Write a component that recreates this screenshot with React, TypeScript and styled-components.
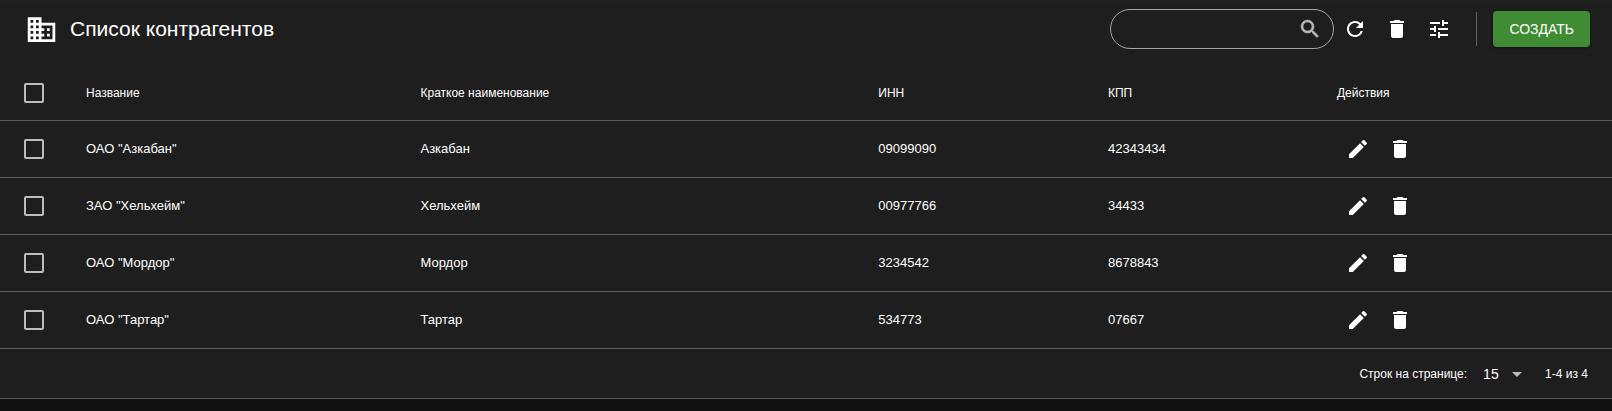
import React from "react";
import styled, { createGlobalStyle } from "styled-components";
import {
  MdArrowDropDown,
  MdDelete,
  MdDomain,
  MdEdit,
  MdRefresh,
  MdSearch,
  MdTune,
} from "react-icons/md";

const GlobalStyle = createGlobalStyle`
  * { box-sizing: border-box; }
  body {
    margin: 0;
    background: #121212;
    color: #fff;
    font-family: "Liberation Sans", Arial, sans-serif;
  }
`;

const Card = styled.main`
  background: #1e1e1e;
  border-top: 2px solid #232323;
  border-bottom: 1px solid #5a5a5a;
  box-shadow: 0 1px 0 #3c3c3c, 0 2px 0 #2a2a2a, 0 3px 3px #1c1c1c;
`;

const Toolbar = styled.header`
  display: flex;
  align-items: center;
  height: 64px;
  padding: 0 22px 10px 25px;
`;

const Title = styled.h1`
  flex: 1;
  margin: 0 0 0 12px;
  font-size: 21px;
  font-weight: 400;
  line-height: 32px;
`;

const SearchBox = styled.label`
  display: flex;
  align-items: center;
  width: 224px;
  height: 40px;
  padding: 0 11px 0 20px;
  border: 1px solid #a5a5a5;
  border-radius: 20px;
  color: #b8b8b8;
`;

const SearchIcon = styled(MdSearch)`
  path:last-child {
    stroke: currentColor;
    stroke-width: 0.6px;
  }
`;

const SearchInput = styled.input`
  flex: 1;
  min-width: 0;
  border: 0;
  outline: 0;
  background: transparent;
  color: #fff;
  font: inherit;
`;

const IconButton = styled.button`
  display: inline-flex;
  align-items: center;
  justify-content: center;
  width: 42px;
  height: 42px;
  padding: 0;
  border: 0;
  background: transparent;
  color: #fff;
  cursor: pointer;
`;

const Divider = styled.span`
  width: 1px;
  height: 34px;
  margin: 0 16px;
  background: #616161;
`;

const CreateButton = styled.button`
  height: 36px;
  padding: 0 16px;
  border: 0;
  border-radius: 4px;
  background: #3f8c35;
  box-shadow: 0 1px 3px rgba(0, 0, 0, 0.5);
  color: #fff;
  font-family: inherit;
  font-size: 14px;
  line-height: 24px;
  cursor: pointer;
`;

const Table = styled.table`
  width: 100%;
  table-layout: fixed;
  border-collapse: separate;
  border-spacing: 0;
  text-align: left;
`;

const Column = styled.col<{ $width?: string }>`
  width: ${({ $width }) => $width ?? "auto"};
`;

const Row = styled.tr<{ $head?: boolean }>`
  height: ${({ $head }) => ($head ? 55 : 57)}px;

  > * {
    border-bottom: 1px solid #5c5c5c;
  }
`;

const HeadCell = styled.th`
  padding: 0 16px;
  font-size: 12px;
  font-weight: 400;
  line-height: 24px;
`;

const Cell = styled.td`
  padding: 0 16px;
  font-size: 13px;
  line-height: 20px;
`;

const CheckCell = styled.td`
  padding: 0 24px;
`;

const Checkbox = styled.input`
  display: block;
  appearance: none;
  width: 20px;
  height: 20px;
  margin: 0;
  border: 2px solid #bcbcbc;
  border-radius: 2px;
  &:checked { background: #3f8c35; }
`;

const Actions = styled.div`
  display: flex;
`;

const Footer = styled.footer`
  display: flex;
  align-items: center;
  justify-content: flex-end;
  height: 49px;
  padding-right: 24px;
  font-size: 12px;
  line-height: 20px;
`;

const PageSize = styled.span`
  display: flex;
  align-items: center;
  margin: 0 16px;
`;

const PageSelect = styled.select`
  appearance: none;
  width: 22px;
  padding: 0;
  border: 0;
  background: transparent;
  color: #fff;
  font-family: inherit;
  font-size: 14px;
  line-height: 20px;
`;

const SelectArrow = styled(MdArrowDropDown)`
  color: #bcbcbc;
  pointer-events: none;
`;

const rows = [
  { name: 'ОАО "Азкабан"', short: "Азкабан", inn: "09099090", kpp: "42343434" },
  { name: 'ЗАО "Хельхейм"', short: "Хельхейм", inn: "00977766", kpp: "34433" },
  { name: 'ОАО "Мордор"', short: "Мордор", inn: "3234542", kpp: "8678843" },
  { name: 'ОАО "Тартар"', short: "Тартар", inn: "534773", kpp: "07667" },
];

export default function App() {
  return (
    <>
      <GlobalStyle />
      <Card>
        <Toolbar>
          <MdDomain size={33} />
          <Title>Список контрагентов</Title>
          <SearchBox>
            <SearchInput type="text" aria-label="Поиск" />
            <SearchIcon size={24} />
          </SearchBox>
          <IconButton aria-label="Обновить"><MdRefresh size={24} /></IconButton>
          <IconButton aria-label="Удалить выбранные"><MdDelete size={24} /></IconButton>
          <IconButton aria-label="Фильтры"><MdTune size={24} /></IconButton>
          <Divider />
          <CreateButton>СОЗДАТЬ</CreateButton>
        </Toolbar>
        <Table>
          <colgroup>
            <Column $width="70px" />
            <Column $width="20.75%" />
            <Column $width="28.4%" />
            <Column $width="14.25%" />
            <Column $width="14.2%" />
            <Column />
          </colgroup>
          <thead>
            <Row $head>
              <CheckCell as="th"><Checkbox type="checkbox" aria-label="Выбрать все" /></CheckCell>
              <HeadCell>Название</HeadCell>
              <HeadCell>Краткое наименование</HeadCell>
              <HeadCell>ИНН</HeadCell>
              <HeadCell>КПП</HeadCell>
              <HeadCell>Действия</HeadCell>
            </Row>
          </thead>
          <tbody>
            {rows.map((row) => (
              <Row key={row.name}>
                <CheckCell><Checkbox type="checkbox" aria-label={row.name} /></CheckCell>
                <Cell>{row.name}</Cell>
                <Cell>{row.short}</Cell>
                <Cell>{row.inn}</Cell>
                <Cell>{row.kpp}</Cell>
                <Cell>
                  <Actions>
                    <IconButton aria-label="Изменить"><MdEdit size={24} /></IconButton>
                    <IconButton aria-label="Удалить"><MdDelete size={24} /></IconButton>
                  </Actions>
                </Cell>
              </Row>
            ))}
          </tbody>
        </Table>
        <Footer>
          <label htmlFor="page-size">Строк на странице:</label>
          <PageSize>
            <PageSelect id="page-size" defaultValue="15">
              <option>15</option>
              <option>30</option>
              <option>50</option>
            </PageSelect>
            <SelectArrow size={24} />
          </PageSize>
          <span>1-4 из 4</span>
        </Footer>
      </Card>
    </>
  );
}
